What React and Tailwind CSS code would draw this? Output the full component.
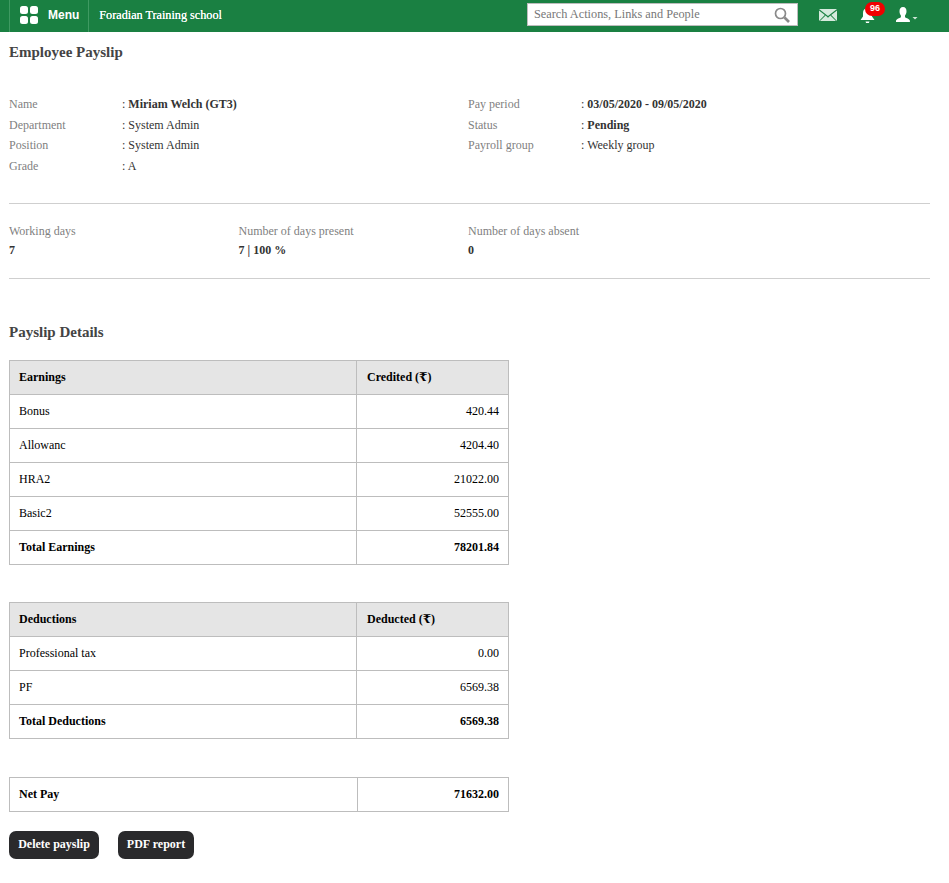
const serif = "font-['Liberation_Serif','DejaVu_Serif',serif]";

function InfoRow({ label, value, bold }) {
  return (
    <div className="flex h-[20.5px] items-center">
      <div className="w-[113px] text-[#7f7f7f]">{label}</div>
      <div className="text-[#333]">
        : <span className={bold ? "font-bold" : ""}>{value}</span>
      </div>
    </div>
  );
}

function Stat({ label, value }) {
  return (
    <div className="w-[229.5px]">
      <div className="h-[20px] leading-[20px] text-[#7f7f7f]">{label}</div>
      <div className="h-[18px] leading-[18px] font-bold text-[#333]">{value}</div>
    </div>
  );
}

function PayTable({ head, rows, total, split = "w-[347px]" }) {
  return (
    <table className="w-[500px] table-fixed border-collapse text-[12px] text-black">
      <colgroup>
        <col className={split} />
        <col />
      </colgroup>
      {head && (
        <thead>
          <tr className="h-[34px] bg-[#e5e5e5] font-bold">
            <td className="border border-[#bdbdbd] pb-[2px] pl-[9px]">{head[0]}</td>
            <td className="border border-[#bdbdbd] pb-[2px] pl-[10px]">{head[1]}</td>
          </tr>
        </thead>
      )}
      <tbody>
        {rows.map((r) => (
          <tr key={r[0]} className="h-[34px]">
            <td className="border border-[#bdbdbd] pb-[2px] pl-[9px]">{r[0]}</td>
            <td className="border border-[#bdbdbd] pr-[9px] pb-[2px] text-right">{r[1]}</td>
          </tr>
        ))}
        <tr className="h-[34px] font-bold">
          <td className="border border-[#bdbdbd] pb-[2px] pl-[9px]">{total[0]}</td>
          <td className="border border-[#bdbdbd] pr-[9px] pb-[2px] text-right">{total[1]}</td>
        </tr>
      </tbody>
    </table>
  );
}

function TopBar() {
  return (
    <div className="flex h-8 items-center bg-[#1a8042] text-white">
      <div className="ml-[9px] flex h-full items-center border-x border-[#3f9a62] pb-[2px]">
        <div className="ml-[10px] grid grid-cols-2 gap-[2px]">
          <span className="h-[8px] w-[8px] rounded-[2.5px] bg-white" />
          <span className="h-[8px] w-[8px] rounded-[2.5px] bg-white" />
          <span className="h-[8px] w-[8px] rounded-[2.5px] bg-white" />
          <span className="h-[8px] w-[8px] rounded-[2.5px] bg-white" />
        </div>
        <span className="ml-[10px] mr-[9px] font-['Liberation_Sans',sans-serif] text-[12px] font-bold">Menu</span>
      </div>
      <div className="mb-[2px] ml-[10px] text-[12.2px] [text-shadow:0_0_0.4px_#fff]">Foradian Training school</div>
      <div className="mb-[3px] ml-auto flex h-[23px] w-[271px] items-center border border-[#bdbdbd] bg-white pl-[6px] pr-[7px] text-[12.3px] text-[#777]">
        <span className="flex-1">Search Actions, Links and People</span>
        <svg width="16" height="16" viewBox="0 0 16 16" fill="none" stroke="#8a8a8a">
          <circle cx="6.500" cy="6.500" r="5" strokeWidth="1.700" />
          <path d="M10.500 10.500L15 15" strokeWidth="2.600" />
        </svg>
      </div>
      <svg className="mb-[2px] ml-[21px]" width="18" height="12" viewBox="0 0 18 12">
        <path d="M0 0h18L9 7z" fill="#d6eadd" />
        <path d="M0 1.500V12l5.800-6zM18 1.500V12l-5.800-6zM1 12h16l-5.600-5.400L9 8.700 6.600 6.600z" fill="#d6eadd" />
      </svg>
      <div className="relative mb-[1px] ml-[23px] h-[16px] w-[15px]">
        <svg width="15" height="16" viewBox="0 0 15 16">
          <path d="M7.500 0C4.600 0 3 2.200 3 5v3.500L0.500 12h14L12 8.500V5c0-2.800-1.600-5-4.500-5z" fill="#fff" />
          <path d="M5.500 13.500h4l-.6 1.600H6.100z" fill="#fff" />
        </svg>
        <span className="absolute -top-[6px] left-[5px] flex h-[14px] w-[20px] items-center justify-center rounded-full bg-[#f00000] font-['Liberation_Sans',sans-serif] text-[9px] font-bold">
          96
        </span>
      </div>
      <svg className="mb-[2px] ml-[20px] mr-[30px]" width="24" height="16" viewBox="0 0 24 16">
        <path d="M8 0c2.400 0 3.500 1.900 3.500 4.200 0 2-.8 3.500-1.500 4.400v1.600c1.400.9 4.300 1.600 4.900 3.200V15H1v-1.600c.6-1.600 3.500-2.300 4.900-3.200V8.600C5.200 7.700 4.500 6.200 4.500 4.200 4.500 1.900 5.700 0 8 0z" fill="#fff" />
        <path d="M17.500 10h5L20 12.500z" fill="#cfe5d7" />
      </svg>
    </div>
  );
}

export default function App() {
  return (
    <div className={`${serif} min-h-[883px] bg-white text-[12px]`}>
      <TopBar />
      <div className="px-[9px]">
        <h1 className="mt-[10px] h-[20px] text-[15px] leading-[20px] font-bold text-[#444]">Employee Payslip</h1>

        <div className="mt-[32px] flex">
          <div className="w-[459px]">
            <InfoRow label="Name" value="Miriam Welch (GT3)" bold />
            <InfoRow label="Department" value="System Admin" />
            <InfoRow label="Position" value="System Admin" />
            <InfoRow label="Grade" value="A" />
          </div>
          <div>
            <InfoRow label="Pay period" value="03/05/2020 - 09/05/2020" bold />
            <InfoRow label="Status" value="Pending" bold />
            <InfoRow label="Payroll group" value="Weekly group" />
          </div>
        </div>

        <div className="mt-[27px] flex h-[76px] w-[921px] items-center border-y border-[#cfcfcf] pb-[2px]">
          <Stat label="Working days" value="7" />
          <Stat label="Number of days present" value="7 | 100 %" />
          <Stat label="Number of days absent" value="0" />
        </div>

        <h2 className="mt-[43px] h-[20px] text-[15px] leading-[20px] font-bold text-[#444]">Payslip Details</h2>

        <div className="mt-[18px]">
          <PayTable
            head={["Earnings", "Credited (₹)"]}
            rows={[
              ["Bonus", "420.44"],
              ["Allowanc", "4204.40"],
              ["HRA2", "21022.00"],
              ["Basic2", "52555.00"],
            ]}
            total={["Total Earnings", "78201.84"]}
          />
        </div>
        <div className="mt-[37px]">
          <PayTable
            head={["Deductions", "Deducted (₹)"]}
            rows={[
              ["Professional tax", "0.00"],
              ["PF", "6569.38"],
            ]}
            total={["Total Deductions", "6569.38"]}
          />
        </div>
        <div className="mt-[38px]">
          <PayTable rows={[]} total={["Net Pay", "71632.00"]} split="w-[348px]" />
        </div>

        <div className="mt-[19px] flex gap-[19px] text-white">
          <button className="h-[28px] w-[90px] rounded-[7px] bg-[#2a2a2c] pb-[2px] font-bold">Delete payslip</button>
          <button className="h-[28px] w-[76px] rounded-[7px] bg-[#2a2a2c] pb-[2px] font-bold">PDF report</button>
        </div>
      </div>
    </div>
  );
}
